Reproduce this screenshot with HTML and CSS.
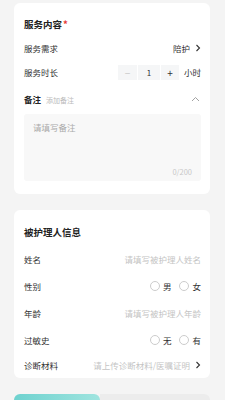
FILE: index.html
```html
<!DOCTYPE html>
<html lang="zh-CN">
<head>
    <meta charset="UTF-8">
    <meta name="viewport" content="width=device-width, initial-scale=1.0">
    <title>服务预约</title>
    <link rel="stylesheet" href="styles.css">
</head>
<body>
    <!-- 服务内容 -->
    <div class="card card-service">
        <div class="row title-row">
            <span class="title">服务内容<span class="required">*</span></span>
        </div>
        <div class="row">
            <span class="label">服务需求</span>
            <span class="value">陪护
                <svg class="chevron" width="6" height="8" viewBox="0 0 6 8"><path d="M1.5 1 L4.5 4 L1.5 7" fill="none" stroke="#333" stroke-width="1.1"/></svg>
            </span>
        </div>
        <div class="row">
            <span class="label">服务时长</span>
            <span class="value">
                <span class="stepper">
                    <span class="step-btn minus">−</span>
                    <span class="step-num">1</span>
                    <span class="step-btn plus">+</span>
                </span>
                <span class="unit">小时</span>
            </span>
        </div>
        <div class="row remark-row">
            <span><span class="label strong">备注</span><span class="hint">添加备注</span></span>
            <svg class="chevron-up" width="9" height="6" viewBox="0 0 9 6"><path d="M1 5 L4.5 1.5 L8 5" fill="none" stroke="#999" stroke-width="0.9"/></svg>
        </div>
        <div class="textarea">
            <div class="ta-placeholder">请填写备注</div>
            <div class="ta-count">0/200</div>
        </div>
    </div>

    <!-- 被护理人信息 -->
    <div class="card card-person">
        <div class="row title-row">
            <span class="title">被护理人信息</span>
        </div>
        <div class="row tall">
            <span class="label">姓名</span>
            <span class="placeholder">请填写被护理人姓名</span>
        </div>
        <div class="row tall">
            <span class="label">性别</span>
            <span class="value">
                <span class="radio"></span><span class="radio-text">男</span>
                <span class="radio second"></span><span class="radio-text">女</span>
            </span>
        </div>
        <div class="row tall">
            <span class="label">年龄</span>
            <span class="placeholder">请填写被护理人年龄</span>
        </div>
        <div class="row tall">
            <span class="label">过敏史</span>
            <span class="value">
                <span class="radio"></span><span class="radio-text">无</span>
                <span class="radio second"></span><span class="radio-text">有</span>
            </span>
        </div>
        <div class="row last">
            <span class="label">诊断材料</span>
            <span class="value">
                <span class="placeholder">请上传诊断材料/医嘱证明</span>
                <svg class="chevron" width="6" height="8" viewBox="0 0 6 8"><path d="M1.5 1 L4.5 4 L1.5 7" fill="none" stroke="#333" stroke-width="1.1"/></svg>
            </span>
        </div>
    </div>

    <div class="bottom-bar">
        <div class="bar-active"></div>
        <div class="bar-rest"></div>
    </div>
</body>
</html>
```

FILE: styles.css
```css
body {
    margin: 0;
    padding: 3px 0 0;
    background-color: #f4f4f4;
    font-family: "Noto Sans CJK SC", "Noto Sans", sans-serif;
    color: #333;
    font-size: 8.5px;
    overflow: hidden;
}

.card {
    margin: 0 15px 0 14px;
    background-color: #fff;
    border-radius: 6px;
    padding: 9px 9px 0 10px;
}

.card-service {
    padding-bottom: 13px;
}

.card-person {
    margin-top: 16px;
    padding-bottom: 2px;
}

.row {
    display: flex;
    align-items: center;
    justify-content: space-between;
    height: 24px;
}

.row.tall {
    height: 27px;
}

.card-person .title-row {
    height: 26px;
}

.row.last {
    height: 23px;
}

.title {
    font-size: 9.5px;
    font-weight: bold;
    color: #222;
}

.required {
    color: #e53935;
    margin-left: 1px;
}

.label {
    color: #333;
}

.label.strong {
    font-weight: bold;
    color: #222;
}

.hint {
    font-size: 7px;
    color: #bbb;
    margin-left: 5px;
}

.value {
    display: flex;
    align-items: center;
}

.chevron {
    margin-left: 5px;
}

.stepper {
    display: flex;
    gap: 1px;
}

.step-btn, .step-num {
    display: flex;
    align-items: center;
    justify-content: center;
    height: 15px;
    background-color: #f5f6f7;
}

.step-btn {
    width: 19px;
    font-size: 10px;
}

.minus {
    color: #c8c8c8;
}

.plus {
    color: #333;
    width: 18px;
}

.step-num {
    width: 22px;
    font-size: 8px;
}

.unit {
    margin-left: 5px;
}

.remark-row {
    height: 29px;
}

.chevron-up {
    margin-right: 1px;
}

.textarea {
    margin-top: 1px;
    height: 67px;
    background-color: #f8f8f8;
    border-radius: 3px;
    position: relative;
}

.ta-placeholder {
    color: #aaa;
    padding: 7px 0 0 9px;
}

.ta-count {
    position: absolute;
    right: 9px;
    bottom: 4px;
    color: #c8c8c8;
    font-size: 7.5px;
}

.placeholder {
    color: #c4c4c4;
}

.radio {
    width: 8px;
    height: 8px;
    border: 0.7px solid #ccc;
    border-radius: 50%;
    margin-right: 3px;
}

.radio.second {
    margin-left: 8px;
}

.bottom-bar {
    display: flex;
    margin: 16px 15px 0 14px;
    height: 40px;
}

.bar-active {
    width: 86px;
    background: linear-gradient(90deg, #6ed2cf, #9fe4df);
    border-radius: 6px 6px 0 0;
}

.bar-rest {
    flex: 1;
    background-color: #ececec;
    border-radius: 0 6px 0 0;
}
```
